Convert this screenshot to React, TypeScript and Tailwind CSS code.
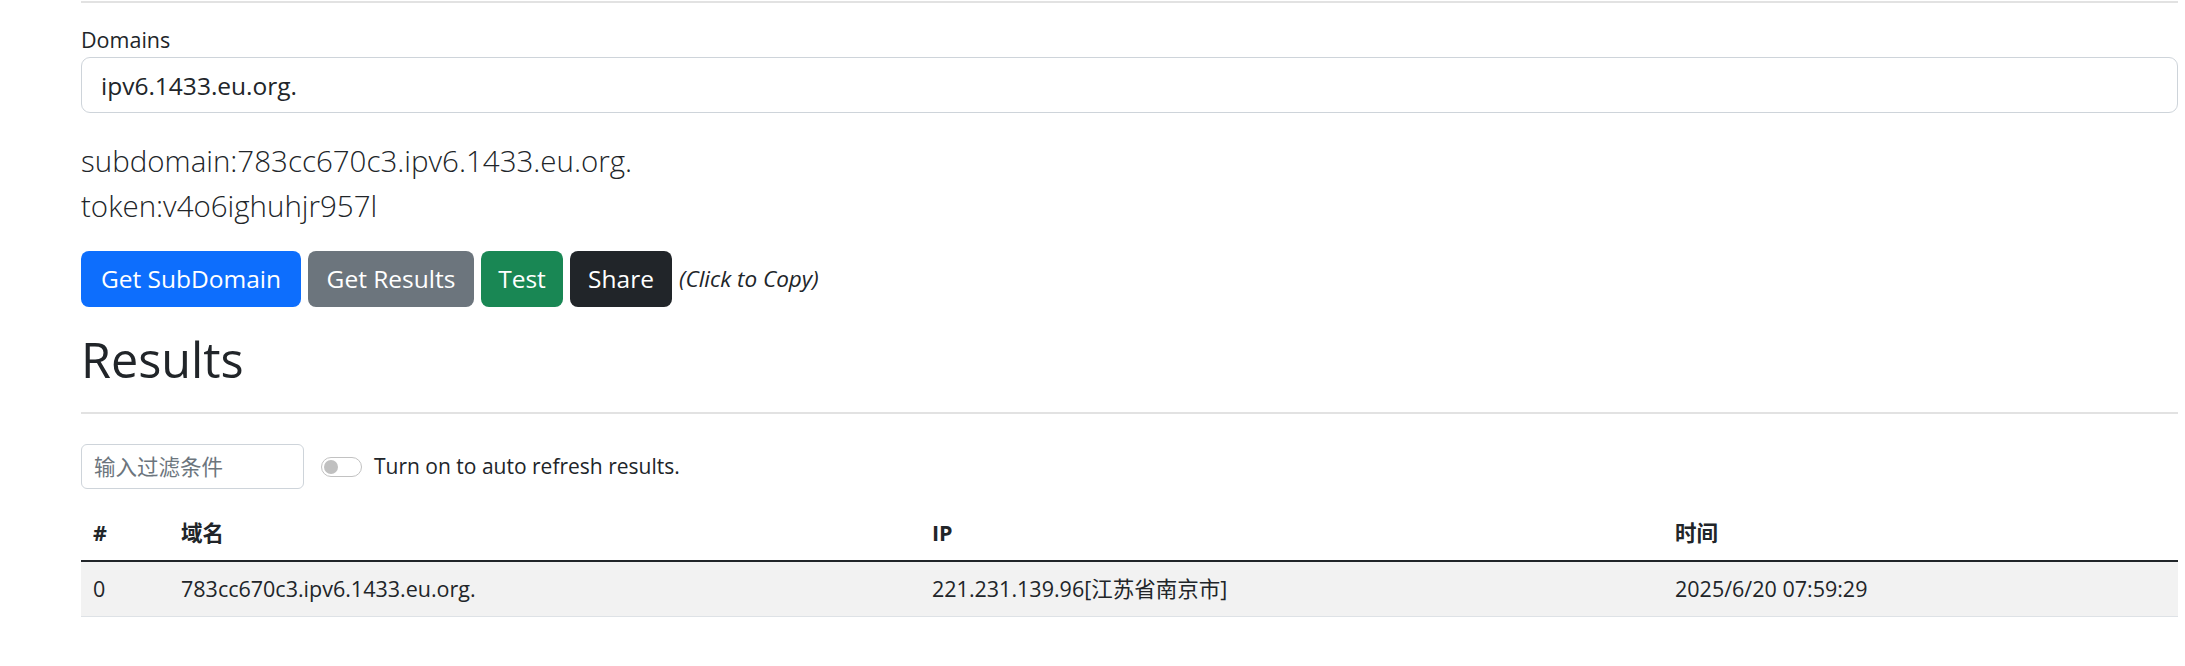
import React from "react";

const font = "font-['Open_Sans','Noto_Sans_CJK_SC',sans-serif]";

function Switch() {
  return (
    <span className="flex h-[20px] w-[41px] items-center rounded-full border border-[#c2c2c2] bg-white">
      <span className="ml-[2px] h-[14px] w-[14px] rounded-full bg-[#c0c0c0]" />
    </span>
  );
}

export default function App() {
  const rows = [
    {
      id: 0,
      domain: "783cc670c3.ipv6.1433.eu.org.",
      ip: "221.231.139.96[江苏省南京市]",
      time: "2025/6/20 07:59:29",
    },
  ];

  return (
    <main className={`min-h-screen bg-white pl-[81px] pr-[7px] text-[#212529] ${font}`}>
      <div className="mt-px h-[2px] bg-[#e2e2e2]" />

      <label className="mt-[20px] block text-[21.5px] leading-[34px]">Domains</label>
      <input
        className="block h-[56px] w-full rounded-[9px] border border-[#ced4da] px-[19px] text-[24.5px] text-[#212529] outline-none"
        value="ipv6.1433.eu.org."
        readOnly
      />

      <div className="mt-[25px] text-[29.5px] font-light leading-[45px]">
        <p>subdomain:783cc670c3.ipv6.1433.eu.org.</p>
        <p>token:v4o6ighuhjr957l</p>
      </div>

      <div className="mt-[23px] flex items-center gap-[7px] text-[24.5px] text-white">
        <button className="flex h-[56px] w-[220px] items-center justify-center rounded-[8px] bg-[#0d6efd]" type="button">
          Get SubDomain
        </button>
        <button className="flex h-[56px] w-[166px] items-center justify-center rounded-[8px] bg-[#6c757d]" type="button">
          Get Results
        </button>
        <button className="flex h-[56px] w-[82px] items-center justify-center rounded-[8px] bg-[#198754]" type="button">
          Test
        </button>
        <button className="flex h-[56px] w-[102px] items-center justify-center rounded-[8px] bg-[#212529]" type="button">
          Share
        </button>
        <i className="text-[22.5px] text-[#212529]">(Click to Copy)</i>
      </div>

      <h2 className="mt-[23px] text-[48.5px] leading-[58px]">Results</h2>
      <div className="mt-[24px] h-[2px] bg-[#e2e2e2]" />

      <div className="mt-[30px] flex items-center">
        <input
          className="h-[45px] w-[223px] rounded-[6px] border border-[#ced4da] px-[12px] text-[21.5px] outline-none placeholder:text-[#6c757d]"
          placeholder="输入过滤条件"
        />
        <span className="ml-[17px]">
          <Switch />
        </span>
        <span className="ml-[12px] text-[21px]">Turn on to auto refresh results.</span>
      </div>

      <table className="mt-[17px] w-full border-collapse text-left text-[21.5px]">
        <thead>
          <tr className="h-[55px] border-b-2 border-[#212529]">
            <th className="w-[88px] px-[12px] font-bold">#</th>
            <th className="w-[751px] px-[12px] font-bold">域名</th>
            <th className="w-[743px] px-[12px] font-bold">IP</th>
            <th className="px-[12px] font-bold">时间</th>
          </tr>
        </thead>
        <tbody>
          {rows.map((r) => (
            <tr key={r.id} className="h-[55px] border-b border-[#dee2e6] bg-[#f2f2f2]">
              <td className="px-[12px]">{r.id}</td>
              <td className="px-[12px]">{r.domain}</td>
              <td className="px-[12px]">{r.ip}</td>
              <td className="px-[12px]">{r.time}</td>
            </tr>
          ))}
        </tbody>
      </table>
    </main>
  );
}
